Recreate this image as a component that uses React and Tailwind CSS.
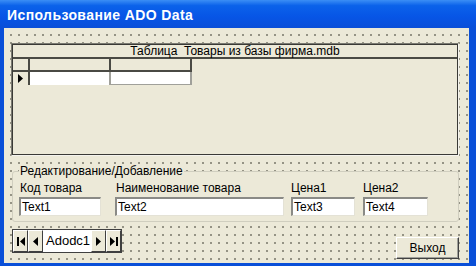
import React from "react";

const font = { fontFamily: '"Liberation Sans", Arial, sans-serif' };

function Tri({ dir }) {
  return dir === "left" ? (
    <svg width="5" height="9" viewBox="0 0 5 9"><path d="M5 0 L0 4.5 L5 9 Z" fill="#000" /></svg>
  ) : (
    <svg width="5" height="9" viewBox="0 0 5 9"><path d="M0 0 L5 4.5 L0 9 Z" fill="#000" /></svg>
  );
}

function NavBtn({ children }) {
  return (
    <div className="w-[15px] h-full flex items-center justify-center bg-[#ECE9D8] border-t border-l border-t-white border-l-white border-r border-b border-r-[#404040] border-b-[#404040] gap-[1px]">
      {children}
    </div>
  );
}

function TextBox({ w, text }) {
  return (
    <div className={`${w} h-[19px] bg-white border-t-2 border-l-2 border-t-[#8a8a86] border-l-[#8a8a86] border-r border-b border-r-[#e4e2d6] border-b-[#e4e2d6] flex items-center pl-[1px] text-[12px] text-black leading-none`}>
      {text}
    </div>
  );
}

export default function App() {
  return (
    <div className="w-[476px] h-[266px] flex flex-col overflow-hidden bg-[#0a4fd8]" style={font}>
      {/* Title bar */}
      <div className="h-[28px] shrink-0 flex items-center pl-[7px] pt-[2px] bg-[linear-gradient(to_bottom,#3b8ef5_0%,#0b62ea_20%,#0755e6_60%,#0a4fd8_100%)]">
        <span className="text-white font-bold text-[14px] tracking-[0.4px]">Использование ADO Data</span>
      </div>
      {/* Body */}
      <div className="flex-1 flex pl-[4px] pr-[7px] pb-[3px]">
        <div className="flex-1 flex flex-col bg-[#ECE9D8] bg-[radial-gradient(circle,#959385_0.75px,transparent_0.8px)] bg-[length:8px_8px] bg-[position:3px_3px] pl-[7px] pr-[10px]">
          {/* DataGrid */}
          <div className="mt-[15px] h-[113px] bg-[#ECE9D8] border-2 border-t-[#7a7a72] border-l-[#7a7a72] border-r-[#f4f3ee] border-b-[#f4f3ee] outline outline-1 outline-[#3a3a36] -outline-offset-2 flex flex-col">
            <div className="h-[14px] flex items-center justify-center text-[12px] text-black leading-none border-b-2 border-b-[#4a4a44] bg-[#ECE9D8]">
              Таблица&nbsp; Товары из базы фирма.mdb
            </div>
            <div className="flex flex-1 bg-[#ECE9D8]">
              <div className="flex flex-col">
                <div className="flex h-[13px] border-b-2 border-b-[#4a4a44]">
                  <div className="w-[17px] border-r-2 border-r-[#4a4a44]"></div>
                  <div className="w-[81px] border-r-2 border-r-[#4a4a44]"></div>
                  <div className="w-[81px] border-r-2 border-r-[#4a4a44]"></div>
                </div>
                <div className="flex h-[13px] bg-white">
                  <div className="w-[17px] bg-[#ECE9D8] border-r-2 border-r-[#4a4a44] flex items-center justify-center">
                    <Tri dir="right" />
                  </div>
                  <div className="w-[81px] border-r-2 border-r-[#a0a09a]"></div>
                  <div className="w-[81px] border-r-2 border-r-[#a0a09a] border-b border-b-[#a0a09a]"></div>
                </div>
              </div>
            </div>
          </div>
          {/* Frame */}
          <div className="relative mt-[15px] h-[51px] border border-[#d0cebf] rounded-[3px] ml-[1px] bg-[#ECE9D8]">
            <div className="absolute -top-[8px] left-[6px] px-[1px] bg-[#ECE9D8] text-[12px] text-black leading-[14px]">
              Редактирование/Добавление
            </div>
            <div className="flex pt-[9px] pl-[6px]">
              <div className="flex flex-col w-[96px]">
                <div className="text-[12px] text-black leading-[14px] pl-[1px]">Код товара</div>
                <div className="mt-[2px]"><TextBox w="w-[82px]" text="Text1" /></div>
              </div>
              <div className="flex flex-col w-[176px]">
                <div className="text-[12px] text-black leading-[14px] pl-[1px]">Наименование товара</div>
                <div className="mt-[2px]"><TextBox w="w-[169px]" text="Text2" /></div>
              </div>
              <div className="flex flex-col w-[72px]">
                <div className="text-[12px] text-black leading-[14px]">Цена1</div>
                <div className="mt-[2px]"><TextBox w="w-[64px]" text="Text3" /></div>
              </div>
              <div className="flex flex-col">
                <div className="text-[12px] text-black leading-[14px]">Цена2</div>
                <div className="mt-[2px]"><TextBox w="w-[65px]" text="Text4" /></div>
              </div>
            </div>
          </div>
          {/* Bottom row */}
          <div className="flex items-start mt-[7px]">
            <div className="ml-[1px] w-[110px] h-[24px] flex border border-[#404040] bg-[#ECE9D8]">
              <NavBtn><div className="w-[2px] h-[9px] bg-black"></div><Tri dir="left" /></NavBtn>
              <NavBtn><Tri dir="left" /></NavBtn>
              <div className="flex-1 bg-white flex items-center pl-[3px] text-[13px] text-black">Adodc1</div>
              <NavBtn><Tri dir="right" /></NavBtn>
              <NavBtn><Tri dir="right" /><div className="w-[2px] h-[9px] bg-black"></div></NavBtn>
            </div>
            <div className="ml-auto mt-[8px] w-[63px] h-[22px] flex items-center justify-center bg-[#ECE9D8] border border-t-white border-l-white border-r-[#404040] border-b-[#404040] shadow-[inset_-1px_-1px_0_#a0a09a] text-[12px] text-black">
              Выход
            </div>
          </div>
        </div>
      </div>
    </div>
  );
}
